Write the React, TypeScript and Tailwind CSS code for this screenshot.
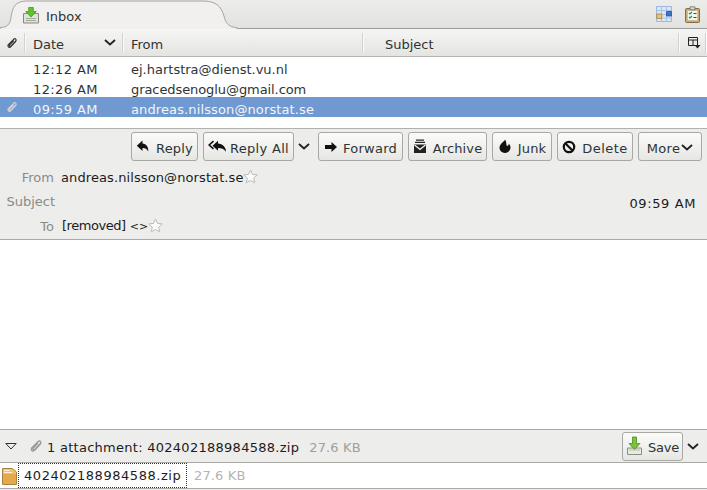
const font = { fontFamily: '"DejaVu Sans", sans-serif' };

function Chevron({ className = "" }: { className?: string }) {
  return (
    <svg width="12" height="7" viewBox="0 0 12 7" className={className}>
      <path d="M1 1l5 4.5L11 1" fill="none" stroke="#222" strokeWidth="1.8" />
    </svg>
  );
}

function Clip({ color = "#333", size = 12 }: { color?: string; size?: number }) {
  return (
    <svg width={size} height={size} viewBox="0 0 13 13">
      <path
        d="M2.600 8.300L8.300 2.500c1.700-1.600 3.700.5 2.100 2.200L5.400 9.900c-1 1-2.400-.3-1.500-1.400L8 4.300"
        fill="none"
        stroke={color}
        strokeWidth="1.300"
        strokeLinecap="round"
      />
      <path d="M2.600 8.300c-1.400 1.700.6 3.900 2.500 2.200l5.300-5.800" fill="none" stroke={color} strokeWidth="1.300" strokeLinecap="round" />
    </svg>
  );
}

function Star({ className = "" }: { className?: string }) {
  return (
    <svg width="15" height="15" viewBox="0 0 15 15" className={className}>
      <path
        d="M7.500 1l2 4.400 4.700.5-3.500 3.200 1 4.700-4.200-2.400-4.200 2.400 1-4.700L.8 5.900l4.700-.5z"
        fill="#fbfbfa"
        stroke="#bdbdb6"
        strokeWidth="1"
      />
    </svg>
  );
}

function ReplyIcon() {
  return (
    <svg width="14" height="13" viewBox="0 0 14 13">
      <path d="M6.500 .5L.8 5.700l5.700 5.200V8c2.800 0 4.500 1 5.800 3.500C12.500 7 10.500 3.800 6.500 3.500z" fill="#111" />
    </svg>
  );
}
function ReplyAllIcon() {
  return (
    <svg width="21" height="13" viewBox="0 0 21 13">
      <path d="M5.500 1.200L1.200 5l4.300 3.800" fill="none" stroke="#111" strokeWidth="1.600" />
      <path d="M10 .8L4.500 5.800l5.500 5V8c3.500 0 6 1 8 3.800C18 7 14.500 3.800 10 3.500z" fill="#111" />
    </svg>
  );
}
function ForwardIcon() {
  return (
    <svg width="14" height="12" viewBox="0 0 14 12">
      <path d="M1 4h6.500V1L13 6l-5.500 5V8H1z" fill="#111" />
    </svg>
  );
}
function ArchiveIcon() {
  return (
    <svg width="14" height="15" viewBox="0 0 14 15">
      <path d="M3 .5h8v1.200H3zM2 2.700h10v1.200H2z" fill="#222" />
      <path d="M1 5.500h12v8.500H1z" fill="#222" />
      <path d="M1.500 6L7 10.300 12.500 6" fill="none" stroke="#eee" strokeWidth="1.300" />
    </svg>
  );
}
function JunkIcon() {
  return (
    <svg width="14" height="15" viewBox="0 0 14 15">
      <path d="M7 .5C6.800 2.500 1.500 4.500 1.500 8.800c0 3 2.500 5.200 5.500 5.200s5.500-2.400 5.500-5.400c0-1.500-.7-3-1.700-3.800-.1 1.400-.9 2.200-1.900 2.200C8.300 6.200 8.700 3 7 .5z" fill="#111" />
    </svg>
  );
}
function DeleteIcon() {
  return (
    <svg width="14" height="14" viewBox="0 0 14 14">
      <circle cx="7" cy="7" r="5.200" fill="none" stroke="#111" strokeWidth="2.200" />
      <path d="M3.500 3.500l7 7" stroke="#111" strokeWidth="2.200" />
    </svg>
  );
}
function SaveIcon() {
  return (
    <svg width="17" height="20" viewBox="0 0 17 20">
      <path d="M1.500 12h14v6.500h-14z" fill="#e9ebe2" stroke="#8a8f80" />
      <path d="M3 14h11" stroke="#b9bdaf" />
      <path d="M6.500 1h4v6.500H14l-5.500 6-5.500-6h3.500z" fill="#7cc23a" stroke="#4c9016" strokeWidth=".8" />
    </svg>
  );
}
function InboxIcon() {
  return (
    <svg width="16" height="17" viewBox="0 0 16 17">
      <path d="M.5 6.500h15V16H.5z" fill="#dfe2d6" stroke="#868b7c" />
      <path d="M3 11.500h10M3 13.500h10" stroke="#a6a99e" />
      <path d="M5.700 .5h4.600v4h3L8 10 2.700 4.500h3z" fill="#5ec22e" stroke="#47991c" strokeWidth=".8" />
    </svg>
  );
}
function LayoutIcon() {
  return (
    <svg width="16" height="16" viewBox="0 0 16 16">
      <path d="M.5.500h15v15H.5z" fill="#dbe6f6" stroke="#9bb7dd" />
      <path d="M.5 4.500h15M.5 8.500h15M.5 12h15M5.500.5v15M10.500.5v15" stroke="#a9c3e6" />
      <path d="M.8 8h5v4.500h-5z" fill="#edc767" stroke="#a5843a" strokeWidth=".8" />
      <path d="M10.500 5.500h5V10h-5z" fill="#3f74c4" stroke="#28549a" strokeWidth=".8" />
    </svg>
  );
}
function TasksIcon() {
  return (
    <svg width="15" height="17" viewBox="0 0 15 17">
      <rect x=".5" y="2.500" width="14" height="14" rx="1" fill="#c9a878" stroke="#8b6b3e" />
      <path d="M2.500 4.500h10v10h-10z" fill="#f4f6ef" stroke="#b4b09f" strokeWidth=".5" />
      <path d="M5 .8h5v3H5z" fill="#d9d9d6" stroke="#6d6d6a" strokeWidth=".8" />
      <path d="M4 7l1 1 2-2M4 11l1 1 2-2" fill="none" stroke="#1f9b1f" strokeWidth="1.200" />
      <path d="M8.500 7.500h3M8.500 11.500h3" stroke="#444" />
    </svg>
  );
}
function ColumnsIcon() {
  return (
    <svg width="13" height="12" viewBox="0 0 13 12">
      <path d="M.5.500h9v8h-9zM.5 3h9M5 3v5.500" fill="none" stroke="#222" />
      <path d="M6.500 8h6l-3 3.500z" fill="#222" />
    </svg>
  );
}
function ZipIcon() {
  return (
    <svg width="15" height="18" viewBox="0 0 15 18">
      <path d="M.5 1.500h10l4 3.500v12.500H.5z" fill="#efc06a" stroke="#a98441" />
      <path d="M1 7h13v10H1z" fill="#e3a94a" />
      <path d="M2 3.500h6M2 5.500h8" stroke="#fff3d2" />
    </svg>
  );
}

function Button({ w, icon, label, gap = "gap-[6px]", track = "" }: { w: string; icon: React.ReactNode; label: React.ReactNode; gap?: string; track?: string }) {
  return (
    <div
      className={`${w} ${gap} h-[29px] shrink-0 flex items-center justify-center rounded-[3px] border border-[#a8a8a4] bg-gradient-to-b from-[#fbfbfa] to-[#e6e6e3] text-[#2e3436]`}
    >
      {icon}
      <span className={`pt-[4px] ${track}`}>{label}</span>
    </div>
  );
}

function Sep({ className = "" }: { className?: string }) {
  return <div className={`w-[2px] h-[20px] bg-[#d2d2cf] border-r border-[#fafafa] shrink-0 ${className}`} />;
}

const rows = [
  { t: "12:12 AM", f: "ej.hartstra@dienst.vu.nl", tr: "" },
  { t: "12:26 AM", f: "gracedsenoglu@gmail.com", tr: "tracking-[-0.08px]" },
  { t: "09:59 AM", f: "andreas.nilsson@norstat.se", tr: "tracking-[0.12px]", sel: true },
];

export default function App() {
  return (
    <div style={font} className="w-[707px] h-[490px] flex flex-col bg-white text-[13px] leading-[20px] text-[#2e3436] overflow-hidden">
      {/* tab bar */}
      <div className="h-[29px] shrink-0 flex border-b border-[#9c9c9a] bg-gradient-to-b from-[#ececea] to-[#e2e2e0]">
        <div className="relative w-[238px] h-[28px] flex items-center pl-[23px] gap-[7px]">
          <svg width="238" height="29" viewBox="0 0 238 29" className="absolute left-0 top-0">
            <path
              d="M0 27.500c7 0 10-3 11-10C12.500 7 15 1.500 26 1h178c12 .5 17 5 20 15 1.500 7 5 11.500 13 11.500v2H0z"
              fill="#f1f0ee"
              stroke="#a5a5a2"
              strokeWidth="1"
            />
          </svg>
          <span className="relative mt-[2px] flex"><InboxIcon /></span>
          <span className="relative pt-[6px]">Inbox</span>
        </div>
        <div className="ml-auto flex items-center pr-[7px] gap-[13px]">
          <LayoutIcon />
          <TasksIcon />
        </div>
      </div>

      {/* column header */}
      <div className="h-[28px] shrink-0 flex items-center border-b border-[#b4b4b0] bg-gradient-to-b from-[#f5f5f4] to-[#e4e4e2]">
        <div className="w-[24px] pl-[6px] flex"><Clip /></div>
        <Sep />
        <div className="w-[96px] pl-[7px] pr-[6px] flex items-center justify-between">
          <span className="pt-[4px]">Date</span>
          <Chevron />
        </div>
        <Sep />
        <div className="w-[238px] pl-[7px] pt-[4px]">From</div>
        <Sep />
        <div className="w-[314px] pl-[21px] pt-[4px]">Subject</div>
        <Sep />
        <div className="w-[25px] pl-[8px] flex"><ColumnsIcon /></div>
        <Sep />
      </div>

      {/* message list */}
      <div className="h-[72px] shrink-0 flex flex-col border-b border-[#b0b0ac]">
        {rows.map((r) => (
          <div
            key={r.t}
            className={`h-[20px] flex items-center pl-[6px] ${r.sel ? "bg-[#6f99d0] text-[#f2f5fa]" : ""}`}
          >
            <div className="w-[27px] flex">{r.sel && <Clip color="#cfd3d6" />}</div>
            <div className="w-[98px] pt-[6px] tracking-[0.4px]">{r.t}</div>
            <div className={`pt-[6px] ${r.tr}`}>{r.f}</div>
          </div>
        ))}
      </div>

      {/* message header */}
      <div className="h-[111px] shrink-0 flex flex-col bg-[#ededeb] border-b border-[#a9a9a6]">
        <div className="h-[37px] flex items-start justify-end gap-[5px] pt-[3px] pr-[5px]">
          <Button w="w-[67px]" icon={<ReplyIcon />} label="Reply" gap="gap-[6px]" track="tracking-[0.2px]" />
          <div className="flex">
            <Button w="w-[91px]" icon={<ReplyAllIcon />} label="Reply All" gap="gap-[1px]" track="tracking-[0.3px]" />
            <div className="w-[19px] h-[29px] flex items-center justify-center shrink-0"><Chevron /></div>
          </div>
          <Button w="w-[85px]" icon={<ForwardIcon />} label="Forward" gap="gap-[5px]" track="tracking-[0.25px]" />
          <Button w="w-[79px]" icon={<ArchiveIcon />} label="Archive" track="tracking-[0.15px]" />
          <Button w="w-[60px]" icon={<JunkIcon />} label="Junk" track="tracking-[0.2px]" />
          <Button w="w-[76px]" icon={<DeleteIcon />} label="Delete" track="tracking-[0.5px]" />
          <Button w="w-[64px]" icon={null} label={<span className="flex items-center gap-[1px]"><span className="tracking-[0.3px]">More</span><Chevron className="mt-[-3px]" /></span>} gap="gap-0" />
        </div>
        <div className="flex h-[25px] items-center">
          <div className="w-[54px] text-right text-[#8b8b88]">From</div>
          <div className="pl-[7px] text-[#1c1c1c] tracking-[0.1px]">andreas.nilsson@norstat.se</div>
          <Star className="mt-[-4px] ml-[-1px]" />
        </div>
        <div className="flex h-[24px] items-center">
          <div className="w-[55px] text-right text-[#8b8b88]">Subject</div>
          <div className="ml-auto pr-[11px] pt-[3px] text-[#1c1c1c] tracking-[0.6px]">09:59 AM</div>
        </div>
        <div className="flex h-[25px] items-center">
          <div className="w-[54px] text-right text-[#8b8b88]">To</div>
          <div className="pl-[8px] text-[#1c1c1c]"><span className="tracking-[-0.45px]">[removed]</span> <span className="text-[11px]">&lt;&gt;</span></div>
          <Star className="mt-[-2px]" />
        </div>
      </div>

      {/* body */}
      <div className="flex-1 bg-white" />

      {/* attachment bar */}
      <div className="h-[34px] shrink-0 flex items-center bg-[#ededeb] border-t border-b border-[#a9a9a6]">
        <svg width="12" height="7" viewBox="0 0 12 7" className="ml-[5px]">
          <path d="M.8.500h10.400L6 6z" fill="none" stroke="#333" strokeWidth="1" />
        </svg>
        <span className="ml-[12px] flex"><Clip color="#9a9a96" size={14} /></span>
        <span className="ml-[4px] pt-[4px] text-[#1c1c1c] tracking-[0.27px]">1 attachment: 402402188984588.zip</span>
        <span className="ml-[10px] pt-[4px] text-[#a0a09c] tracking-[0.15px]">27.6 KB</span>
        <div className="ml-auto flex items-center pr-[8px]">
          <Button w="w-[61px]" icon={<SaveIcon />} label="Save" gap="gap-[5px]" track="tracking-[-0.2px]" />
          <Chevron className="ml-[4px]" />
        </div>
      </div>

      {/* attachment list */}
      <div className="h-[26px] shrink-0 flex items-center border-b border-[#a9a9a6]">
        <span className="ml-[2px] flex"><ZipIcon /></span>
        <span className="ml-[1px] h-[25px] w-[169px] flex items-center pl-[5px] border border-dotted border-[#333] text-[#1c1c1c] tracking-[0.55px]">402402188984588.zip</span>
        <span className="ml-[7px] text-[#b4b4b0] tracking-[0.15px]">27.6 KB</span>
      </div>
      <div className="h-[1px] shrink-0 bg-[#ededeb]" />
    </div>
  );
}
